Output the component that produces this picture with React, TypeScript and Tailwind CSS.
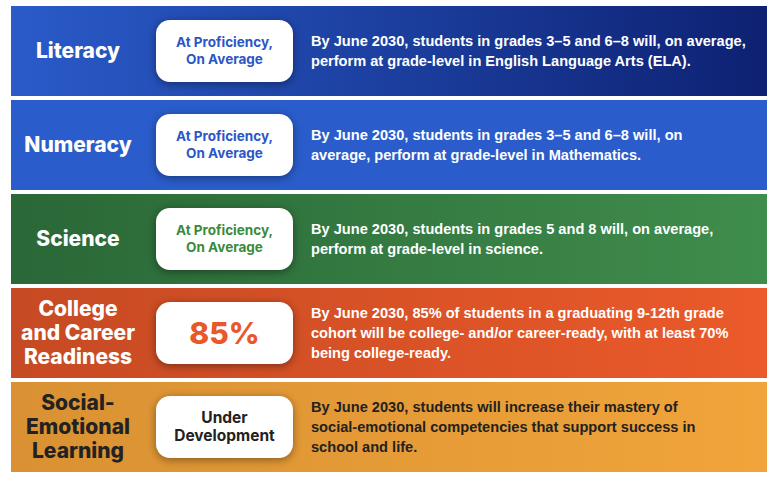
import React from "react";

type Row = {
  label: string[];
  badge: React.ReactNode;
  desc: string[];
  bg: string;
  dark?: boolean;
};

const profBlue = (
  <span className="text-[13.5px] leading-[17px] font-bold text-[#2c55c6]">
    At Proficiency,
    <br />
    On Average
  </span>
);

const rows: Row[] = [
  {
    label: ["Literacy"],
    badge: profBlue,
    desc: [
      "By June 2030, students in grades 3–5 and 6–8 will, on average,",
      "perform at grade-level in English Language Arts (ELA).",
    ],
    bg: "bg-gradient-to-r from-[#2a5bc9] via-[#1c3f9f] to-[#0e2172]",
  },
  {
    label: ["Numeracy"],
    badge: profBlue,
    desc: [
      "By June 2030, students in grades 3–5 and 6–8 will, on",
      "average, perform at grade-level in Mathematics.",
    ],
    bg: "bg-[#2a5dcb]",
  },
  {
    label: ["Science"],
    badge: (
      <span className="text-[13.5px] leading-[17px] font-bold text-[#3a8a3c]">
        At Proficiency,
        <br />
        On Average
      </span>
    ),
    desc: [
      "By June 2030, students in grades 5 and 8 will, on average,",
      "perform at grade-level in science.",
    ],
    bg: "bg-gradient-to-r from-[#2a6837] to-[#3f8d4c]",
  },
  {
    label: ["College", "and Career", "Readiness"],
    badge: (
      <span className="text-[30px] leading-none font-extrabold text-[#e9572a]">85%</span>
    ),
    desc: [
      "By June 2030, 85% of students in a graduating 9-12th grade",
      "cohort will be college- and/or career-ready, with at least 70%",
      "being college-ready.",
    ],
    bg: "bg-gradient-to-r from-[#c64a23] to-[#eb5a2a]",
  },
  {
    label: ["Social-", "Emotional", "Learning"],
    badge: (
      <span className="text-[15.5px] leading-[18px] font-bold text-[#222222]">
        Under
        <br />
        Development
      </span>
    ),
    desc: [
      "By June 2030, students will increase their mastery of",
      "social-emotional competencies that support success in",
      "school and life.",
    ],
    bg: "bg-gradient-to-r from-[#d99133] to-[#f1a43a]",
    dark: true,
  },
];

export default function App() {
  return (
    <div className="w-[777px] h-[482px] bg-white pt-[6px] pl-[11px] overflow-hidden">
      <div className="w-[756px] flex flex-col gap-[4px]">
        {rows.map((r, i) => (
          <div key={i} className={`h-[90px] flex items-center ${r.bg}`}>
            <div
              className={`w-[134px] shrink-0 flex flex-col items-center text-center text-[21px] leading-[24px] font-extrabold ${
                r.dark ? "text-[#222222]" : "text-white"
              }`}
              style={{ fontFamily: "Inter, 'Open Sans', sans-serif" }}
            >
              {r.label.map((l, j) => (
                <span key={j} className="whitespace-nowrap">
                  {l}
                </span>
              ))}
            </div>
            <div
              className="ml-[11px] w-[137px] h-[62px] shrink-0 bg-white rounded-[14px] flex items-center justify-center text-center shadow-[0_2px_8px_rgba(0,0,0,0.4)]"
              style={{ fontFamily: "Inter, 'Open Sans', sans-serif" }}
            >
              {r.badge}
            </div>
            <div
              className={`ml-[18px] text-[14.6px] leading-[20px] font-bold whitespace-nowrap flex flex-col ${
                r.dark ? "text-[#222222]" : "text-white"
              }`}
              style={{ fontFamily: "'Liberation Sans', Arial, sans-serif" }}
            >
              {r.desc.map((l, j) => (
                <span key={j}>{l}</span>
              ))}
            </div>
          </div>
        ))}
      </div>
    </div>
  );
}
